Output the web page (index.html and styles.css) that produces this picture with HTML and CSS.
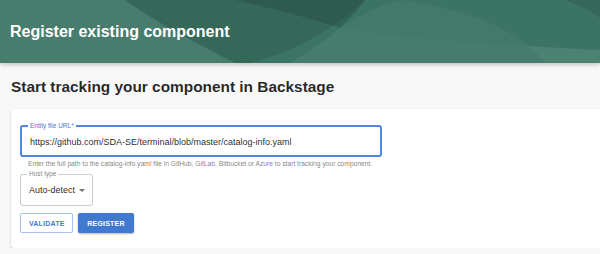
FILE: index.html
```html
<!DOCTYPE html>
<html lang="en">
<head>
    <meta charset="UTF-8">
    <meta name="viewport" content="width=device-width, initial-scale=1.0">
    <title>Register existing component</title>
    <link rel="stylesheet" href="styles.css">
</head>
<body>
    <header class="page-header">
        <h1>Register existing component</h1>
    </header>

    <main class="content">
        <h2 class="section-title">Start tracking your component in Backstage</h2>

        <div class="card">
            <form class="register-form" onsubmit="return false;">
                <fieldset class="outlined url-field">
                    <legend>Entity file URL*</legend>
                    <input type="text" name="url" class="url-input" value="https://github.com/SDA-SE/terminal/blob/master/catalog-info.yaml">
                </fieldset>
                <p class="helper-text">Enter the full path to the catalog-info.yaml file in GitHub, GitLab, Bitbucket or Azure to start tracking your component.</p>

                <fieldset class="outlined select-field">
                    <legend>Host type</legend>
                    <div class="select-value">
                        <span>Auto-detect</span>
                        <svg class="select-arrow" width="6" height="3" viewBox="0 0 10 5"><path d="M0 0l5 5 5-5z" fill="#757575"/></svg>
                    </div>
                </fieldset>

                <div class="actions">
                    <button type="button" class="btn btn-outline">Validate</button>
                    <button type="submit" class="btn btn-primary">Register</button>
                </div>
            </form>
        </div>
    </main>
</body>
</html>
```

FILE: styles.css
```css
body {
    font-family: 'Liberation Sans', Arial, sans-serif;
    background-color: #F8F8F8;
    color: rgba(0, 0, 0, 0.87);
    margin: 0;
    padding: 0;
    overflow: hidden;
}

.page-header {
    height: 63px;
    display: flex;
    align-items: center;
    padding-left: 10px;
    background-color: #3B7464;
    background-image: url("data:image/svg+xml,%3Csvg xmlns='http://www.w3.org/2000/svg' width='600' height='63' viewBox='0 0 600 63' preserveAspectRatio='none'%3E%3Cpath d='M0 0H125C160 25 200 45 235 63H0Z' fill='%23ffffff' fill-opacity='0.07'/%3E%3Cpath d='M125 0H365C340 25 300 50 250 63H235C200 45 160 25 125 0Z' fill='%23000000' fill-opacity='0.1'/%3E%3Cpath d='M235 0H365C355 15 345 22 340 28C300 15 265 7 235 0Z' fill='%23000000' fill-opacity='0.12'/%3E%3Cpath d='M340 28C420 40 500 45 600 50V63H290C310 50 330 38 340 28Z' fill='%23ffffff' fill-opacity='0.06'/%3E%3Cpath d='M400 0C470 10 520 30 545 63H600V50C500 45 420 40 340 28C360 15 380 5 400 0Z' fill='%23ffffff' fill-opacity='0.04'/%3E%3Cpath d='M565 0H600V18C590 10 578 5 565 0Z' fill='%23000000' fill-opacity='0.1'/%3E%3C/svg%3E");
    background-size: 100% 100%;
    box-shadow: 0 2px 4px rgba(0, 0, 0, 0.2);
    position: relative;
}

.page-header h1 {
    margin: 0;
    color: #FFFFFF;
    font-size: 16px;
    font-weight: bold;
}

.content {
    padding: 12px 0 0 11px;
}

.section-title {
    margin: 0 0 10px;
    font-size: 15.4px;
    font-weight: bold;
    line-height: 24px;
    color: rgba(0, 0, 0, 0.85);
}

.card {
    background: #FFFFFF;
    border-radius: 3px;
    box-shadow: 0 1px 2px rgba(0, 0, 0, 0.25);
    padding: 13px 0 15px 9px;
    margin-right: -4px;
}

.outlined {
    margin: 0;
    padding: 0 8px;
    border-radius: 3px;
    min-inline-size: 0;
}

.outlined legend {
    font-size: 6.5px;
    line-height: 8px;
    padding: 0 2px;
    margin-left: -2px;
}

.url-field {
    width: 342px;
    border: 2px solid #4E87DD;
}

.url-field legend {
    color: #3F7AD0;
}

.url-input {
    display: block;
    border: none;
    outline: none;
    padding: 0 0 2px;
    margin: 0;
    height: 25px;
    box-sizing: border-box;
    width: 100%;
    font-family: inherit;
    font-size: 9px;
    color: rgba(0, 0, 0, 0.87);
    background: transparent;
}

.helper-text {
    margin: 3px 0 2px 8px;
    font-size: 6.7px;
    line-height: 8px;
    color: rgba(0, 0, 0, 0.54);
}

.select-field {
    width: 56px;
    padding: 0 7px 0 8px;
    border: 1px solid rgba(0, 0, 0, 0.2);
}

.select-field legend {
    color: rgba(0, 0, 0, 0.54);
}

.select-value {
    display: flex;
    align-items: center;
    justify-content: space-between;
    height: 27px;
    padding-bottom: 3px;
    box-sizing: border-box;
    font-size: 9px;
    white-space: nowrap;
}

.actions {
    display: flex;
    gap: 5px;
    margin-top: 7px;
}

.btn {
    height: 20px;
    padding: 0 8px;
    border-radius: 2px;
    font-family: inherit;
    font-size: 7px;
    font-weight: bold;
    text-transform: uppercase;
    letter-spacing: 0.2px;
    cursor: pointer;
}

.btn-outline {
    background: #FFFFFF;
    color: #3F7AD0;
    border: 1px solid rgba(63, 122, 208, 0.45);
    width: 53px;
}

.btn-primary {
    background: #3F7AD0;
    color: #FFFFFF;
    border: none;
    width: 56px;
    box-shadow: 0 1px 2px rgba(0, 0, 0, 0.3);
}
```
